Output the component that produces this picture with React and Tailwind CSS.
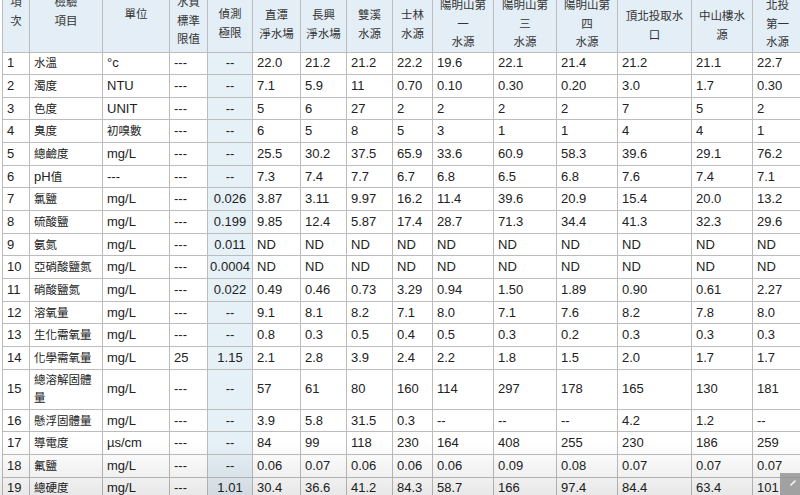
import React from "react"

// column widths, measured from the grid lines
const cols = [27, 73, 67, 38, 45, 48, 46, 46, 40, 61, 63, 61, 74, 61, 50]

const headers = [
  { lines: ["項", "次"], pt: "pt-[0px]" },
  { lines: ["檢驗", "項目"], pt: "pt-[0px]" },
  { lines: ["單位"], pt: "pt-[12px]" },
  { lines: ["水質", "標準", "限值"], pt: "pt-[0px]" },
  { lines: ["偵測", "極限"], pt: "pt-[12px]" },
  { lines: ["直潭", "淨水場"], pt: "pt-[13px]" },
  { lines: ["長興", "淨水場"], pt: "pt-[13px]" },
  { lines: ["雙溪", "水源"], pt: "pt-[13px]" },
  { lines: ["士林", "水源"], pt: "pt-[13px]" },
  { lines: ["陽明山第", "一", "水源"], pt: "pt-[3px]" },
  { lines: ["陽明山第", "三", "水源"], pt: "pt-[3px]" },
  { lines: ["陽明山第", "四", "水源"], pt: "pt-[3px]" },
  { lines: ["頂北投取水", "口"], pt: "pt-[14px]" },
  { lines: ["中山樓水", "源"], pt: "pt-[14px]" },
  { lines: ["北投", "第一", "水源"], pt: "pt-[3px]" },
]

const rows = [
  ["1", "水溫", "°c", "---", "--", "22.0", "21.2", "21.2", "22.2", "19.6", "22.1", "21.4", "21.2", "21.1", "22.7"],
  ["2", "濁度", "NTU", "---", "--", "7.1", "5.9", "11", "0.70", "0.10", "0.30", "0.20", "3.0", "1.7", "0.30"],
  ["3", "色度", "UNIT", "---", "--", "5", "6", "27", "2", "2", "2", "2", "7", "5", "2"],
  ["4", "臭度", "初嗅數", "---", "--", "6", "5", "8", "5", "3", "1", "1", "4", "4", "1"],
  ["5", "總鹼度", "mg/L", "---", "--", "25.5", "30.2", "37.5", "65.9", "33.6", "60.9", "58.3", "39.6", "29.1", "76.2"],
  ["6", "pH值", "---", "---", "--", "7.3", "7.4", "7.7", "6.7", "6.8", "6.5", "6.8", "7.6", "7.4", "7.1"],
  ["7", "氯鹽", "mg/L", "---", "0.026", "3.87", "3.11", "9.97", "16.2", "11.4", "39.6", "20.9", "15.4", "20.0", "13.2"],
  ["8", "硫酸鹽", "mg/L", "---", "0.199", "9.85", "12.4", "5.87", "17.4", "28.7", "71.3", "34.4", "41.3", "32.3", "29.6"],
  ["9", "氨氮", "mg/L", "---", "0.011", "ND", "ND", "ND", "ND", "ND", "ND", "ND", "ND", "ND", "ND"],
  ["10", "亞硝酸鹽氮", "mg/L", "---", "0.0004", "ND", "ND", "ND", "ND", "ND", "ND", "ND", "ND", "ND", "ND"],
  ["11", "硝酸鹽氮", "mg/L", "---", "0.022", "0.49", "0.46", "0.73", "3.29", "0.94", "1.50", "1.89", "0.90", "0.61", "2.27"],
  ["12", "溶氧量", "mg/L", "---", "--", "9.1", "8.1", "8.2", "7.1", "8.0", "7.1", "7.6", "8.2", "7.8", "8.0"],
  ["13", "生化需氧量", "mg/L", "---", "--", "0.8", "0.3", "0.5", "0.4", "0.5", "0.3", "0.2", "0.3", "0.3", "0.3"],
  ["14", "化學需氧量", "mg/L", "25", "1.15", "2.1", "2.8", "3.9", "2.4", "2.2", "1.8", "1.5", "2.0", "1.7", "1.7"],
  ["15", "總溶解固體量", "mg/L", "---", "--", "57", "61", "80", "160", "114", "297", "178", "165", "130", "181"],
  ["16", "懸浮固體量", "mg/L", "---", "--", "3.9", "5.8", "31.5", "0.3", "--", "--", "--", "4.2", "1.2", "--"],
  ["17", "導電度", "µs/cm", "---", "--", "84", "99", "118", "230", "164", "408", "255", "230", "186", "259"],
  ["18", "氟鹽", "mg/L", "---", "--", "0.06", "0.07", "0.06", "0.06", "0.06", "0.09", "0.08", "0.07", "0.07", "0.07"],
  ["19", "總硬度", "mg/L", "---", "1.01", "30.4", "36.6", "41.2", "84.3", "58.7", "166", "97.4", "84.4", "63.4", "101"],
]

// CJK glyphs render a bit smaller than the latin text in the original
const CJK = /([\u3400-\u9fff]+)/
function Txt({ s }) {
  return s.split(CJK).map((part, i) =>
    i % 2 === 1 ? (
      <span key={i} className="text-[11.5px]">
        {part}
      </span>
    ) : (
      part
    )
  )
}

export default function App() {
  return (
    <div className="relative w-[800px] h-[495px] overflow-hidden bg-white font-['Liberation_Sans','Noto_Sans_CJK_TC',sans-serif] text-[13px] text-[#222]">
      <table className="table-fixed border-collapse -mt-[8px] ml-[2px]" style={{ width: cols.reduce((a, b) => a + b, 0) }}>
        <colgroup>
          {cols.map((w, i) => (
            <col key={i} style={{ width: w }} />
          ))}
        </colgroup>
        <thead>
          <tr className="h-[58px]">
            {headers.map((h, i) => (
              <th
                key={i}
                className={`border border-[#bcbcbc] bg-[#e4eef6] align-top font-normal text-center leading-[17.5px] text-[#333] px-0 ${h.pt}`}
              >
                {h.lines.map((l, j) => (
                  <div key={j}>
                    <Txt s={l} />
                  </div>
                ))}
              </th>
            ))}
          </tr>
        </thead>
        <tbody>
          {rows.map((r) => (
            <tr key={r[0]} className={r[0] === "15" ? "h-[40px]" : "h-[22.66px]"}>
              {r.map((c, i) => (
                <td
                  key={i}
                  className={`border border-[#bcbcbc] align-middle leading-[18px] py-0 ${
                    i === 4 ? "bg-[#e6f0f7] text-center px-0" : "px-[4px] text-left"
                  }`}
                >
                  <Txt s={c} />
                </td>
              ))}
            </tr>
          ))}
        </tbody>
      </table>

      {/* soft shade over the bottom rows */}
      <div className="pointer-events-none absolute left-0 right-0 bottom-0 h-[52px] bg-linear-to-b from-transparent to-black/[0.09]" />

      {/* corner grip */}
      <div className="absolute right-0 bottom-0 w-[20px] h-[22px] bg-[#8f8f8f]/80 flex items-center justify-center">
        <svg width="10" height="10" viewBox="0 0 10 10" className="ml-[6px] -mt-[2px]">
          <path d="M3 7 L7 3" stroke="white" strokeWidth="1.5" strokeLinecap="round" />
        </svg>
      </div>
    </div>
  )
}
